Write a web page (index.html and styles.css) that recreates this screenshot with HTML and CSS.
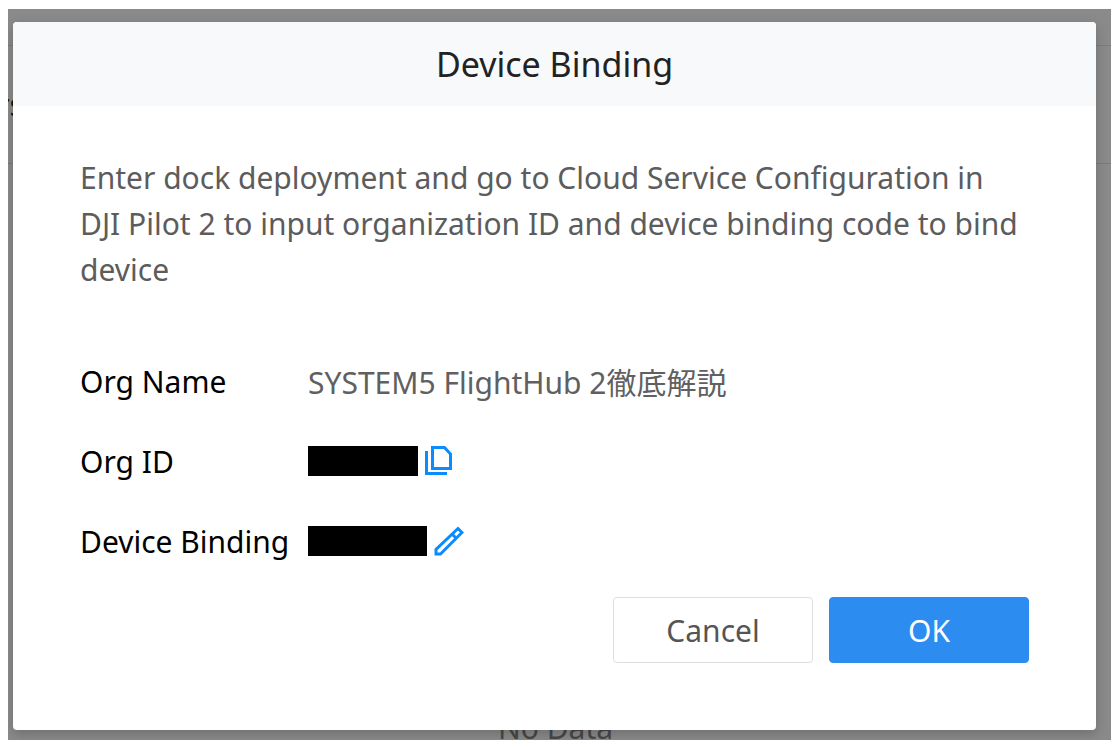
FILE: index.html
```html
<!doctype html>
<html lang="en">
  <head>
    <meta charset="utf-8">
    <meta name="viewport" content="width=device-width, initial-scale=1">
    <title>Device Binding</title>
    <link rel="stylesheet" href="styles.css">
  </head>
  <body>
    <div class="app">
      <!-- Device list, dimmed behind the dialog -->
      <div class="device-list" aria-hidden="true">
        <div class="list-toolbar"></div>
        <div class="list-header"><span class="list-column">rs</span></div>
        <div class="list-empty">No Data</div>
      </div>

      <div class="modal" role="dialog" aria-modal="true" aria-labelledby="modal-title">
        <header class="modal-header">
          <h1 id="modal-title">Device Binding</h1>
        </header>

        <main class="modal-body">
          <p class="description">Enter dock deployment and go to Cloud Service Configuration in DJI Pilot 2 to input organization ID and device binding code to bind device</p>

          <dl class="fields">
            <div class="field">
              <dt>Org Name</dt>
              <dd>SYSTEM5 FlightHub 2徹底解説</dd>
            </div>
            <div class="field">
              <dt>Org ID</dt>
              <dd>
                <span class="redacted redacted-id"></span>
                <button class="icon-button" type="button" aria-label="Copy Org ID">
                  <svg width="30" height="30" viewBox="0 0 30 30" fill="none" stroke="#0a8cff" stroke-width="3">
                    <path d="M7.5 1.5H19.5L25.5 8V22.5H7.5Z"/>
                    <path d="M1.5 5V27.5H22"/>
                  </svg>
                </button>
              </dd>
            </div>
            <div class="field">
              <dt>Device Binding</dt>
              <dd>
                <span class="redacted redacted-code"></span>
                <button class="icon-button" type="button" aria-label="Edit device binding code">
                  <svg width="30" height="30" viewBox="0 0 30 30" fill="none" stroke="#0a8cff" stroke-width="3">
                    <path d="M2 28V23.5L24 2.5L28 6.5L6.5 28Z"/>
                    <path d="M18 8L22.5 12.5"/>
                  </svg>
                </button>
              </dd>
            </div>
          </dl>

          <footer class="modal-footer">
            <button class="button" type="button">Cancel</button>
            <button class="button button-primary" type="button">OK</button>
          </footer>
        </main>
      </div>
    </div>
  </body>
</html>
```
FILE: styles.css
```css
* {
  box-sizing: border-box;
}

html, body {
  height: 100%;
  margin: 0;
}

body {
  background: #fff;
  font-family: 'Noto Sans', 'Noto Sans CJK JP', sans-serif;
  font-size: 30px;
  padding: 9px 2px 7px 8px;
}

.app {
  background: #8a8a8a;
  height: 100%;
  overflow: hidden;
  position: relative;
}

.device-list {
  display: flex;
  flex-direction: column;
  height: 100%;
}

.list-toolbar {
  border-bottom: 1px solid #7b7b7b;
  flex: 0 0 37px;
}

.list-header {
  align-items: center;
  border-bottom: 1px solid #7b7b7b;
  display: flex;
  flex: 0 0 118px;
}

.list-column {
  color: #151515;
  display: flex;
  justify-content: flex-end;
  overflow: hidden;
  width: 16px;
}

.list-empty {
  align-items: flex-end;
  color: #484848;
  display: flex;
  flex: 1;
  justify-content: center;
  line-height: 24px;
  padding-right: 8px;
}

/* The dialog lies over the list */
.modal {
  background: #fff;
  border-radius: 4px;
  bottom: 10px;
  box-shadow: 0 4px 12px rgba(0, 0, 0, 0.2);
  left: 5px;
  overflow: hidden;
  position: absolute;
  right: 15px;
  top: 13px;
}

.modal-header {
  background: #f7f9fb;
  padding: 20px;
  text-align: center;
}

.modal-header h1 {
  color: #222;
  font-size: 34px;
  font-weight: normal;
  line-height: 44px;
  margin: 0;
}

.modal-body {
  padding: 49px 67px;
}

.description {
  color: #5c5c5c;
  line-height: 46px;
  margin: 0 0 48px;
}

.fields {
  margin: 0;
}

.field {
  align-items: center;
  display: flex;
  height: 80px;
}

.field dt {
  color: #000;
  flex: 0 0 228px;
}

.field dd {
  align-items: center;
  color: #606060;
  display: flex;
  gap: 7px;
  margin: 0;
}

.redacted {
  background: #000;
  height: 30px;
}

.redacted-id {
  width: 110px;
}

.redacted-code {
  width: 119px;
}

.icon-button {
  background: none;
  border: 0;
  cursor: pointer;
  display: flex;
  padding: 0;
}

.modal-footer {
  display: flex;
  gap: 16px;
  justify-content: flex-end;
  margin-top: 16px;
}

.button {
  background: #fff;
  border: 1px solid #dcdee2;
  border-radius: 4px;
  color: #555;
  cursor: pointer;
  font: inherit;
  height: 66px;
  width: 200px;
}

.button-primary {
  background: #2d8cf0;
  border-color: #2d8cf0;
  color: #fff;
}
```
